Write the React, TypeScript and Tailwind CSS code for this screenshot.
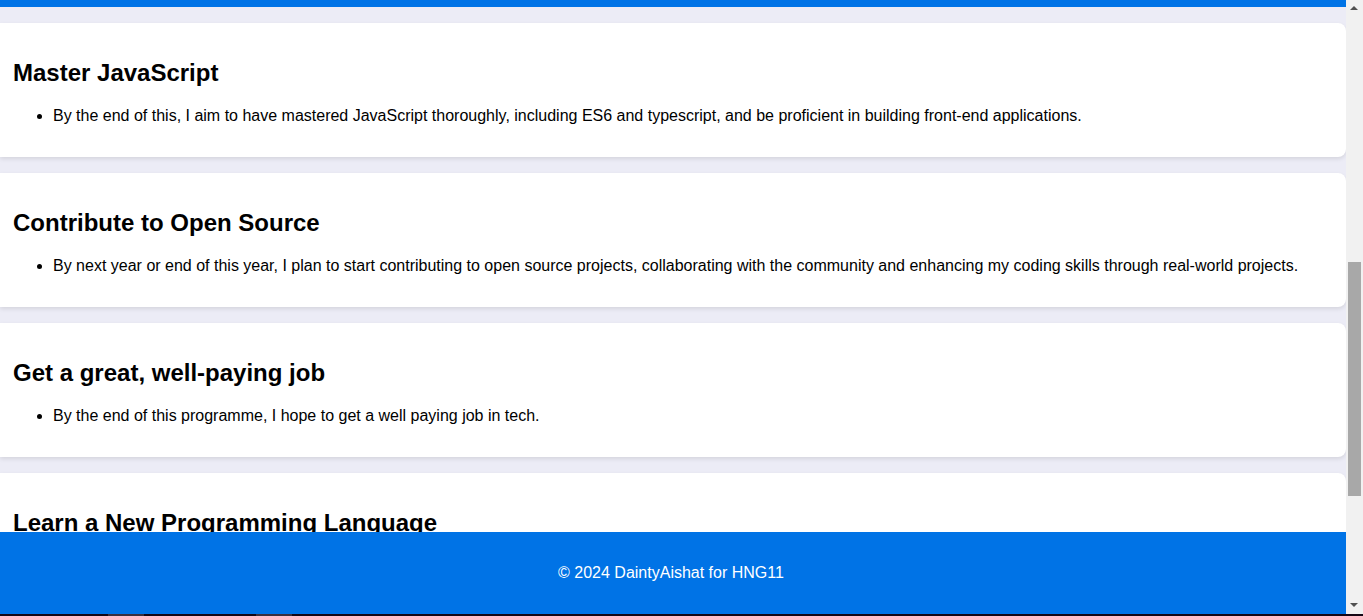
const goals = [
  {
    title: 'Master JavaScript',
    text: 'By the end of this, I aim to have mastered JavaScript thoroughly, including ES6 and typescript, and be proficient in building front-end applications.',
  },
  {
    title: 'Contribute to Open Source',
    text: 'By next year or end of this year, I plan to start contributing to open source projects, collaborating with the community and enhancing my coding skills through real-world projects.',
  },
  {
    title: 'Get a great, well-paying job',
    text: 'By the end of this programme, I hope to get a well paying job in tech.',
  },
  {
    title: 'Learn a New Programming Language',
    text: 'I want to pick up a new programming language and build something useful with it.',
  },
];

const GoalCard = ({ title, text }: { title: string; text: string }) => (
  <section className='rounded-r-lg bg-white py-4 pl-[13px] pr-4 shadow-[0_2px_4px_rgba(0,0,0,0.1)]'>
    <h2 className='my-5 text-2xl font-bold leading-[27.6px] text-black'>{title}</h2>
    <ul className='my-4 list-disc pl-10 text-base leading-[18.4px] text-black'>
      <li>{text}</li>
    </ul>
  </section>
);

const App = () => {
  return (
    <div className="flex h-[616px] w-[1363px] flex-col overflow-hidden font-['Liberation_Sans',Arial,sans-serif]">
      <div className='flex h-[614px]'>
        <div className='flex w-[1346px] flex-col'>
          <main className='h-[532px] overflow-hidden bg-[#ececf6]'>
            <div className='h-[7px] bg-[#0073e6]' />
            <div className='flex flex-col gap-4 pt-4'>
              {goals.map((g) => (
                <GoalCard key={g.title} title={g.title} text={g.text} />
              ))}
            </div>
          </main>
          <footer className='flex h-[82px] items-center justify-center bg-[#0073e6] pb-[1px] pr-[4px] text-base text-white'>
            © 2024 DaintyAishat for HNG11
          </footer>
        </div>

        {/* scrollbar */}
        <div className='relative w-[17px] bg-[#f1f1f1]'>
          <div className='absolute left-[4px] top-[6px] h-0 w-0 border-x-[4px] border-b-[4px] border-x-transparent border-b-[#505050]' />
          <div className='absolute left-[2px] top-[262px] h-[234px] w-[13px] bg-[#a8a8a8]' />
          <div className='absolute bottom-[7px] left-[4px] h-0 w-0 border-x-[4px] border-t-[4px] border-x-transparent border-t-[#505050]' />
        </div>
      </div>
      <div className='flex h-[2px] bg-[#150715]'>
        <div className='ml-[108px] w-[36px] bg-[#3a2f3f]' />
        <div className='ml-[112px] w-[36px] bg-[#3a2f3f]' />
      </div>
    </div>
  );
};

export default App;
